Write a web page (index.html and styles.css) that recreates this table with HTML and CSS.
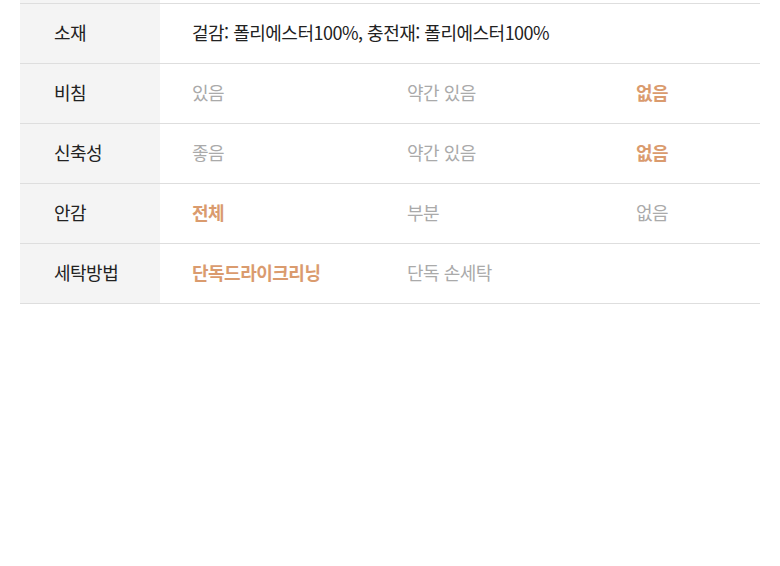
FILE: index.html
```html
<!DOCTYPE html>
<html lang="ko">
<head>
    <meta charset="UTF-8">
    <meta name="viewport" content="width=device-width, initial-scale=1.0">
    <title>상품 정보</title>
    <link rel="stylesheet" href="styles.css">
</head>
<body>
    <div class="spec-table">
        <div class="spec-row cut">
            <div class="spec-label"></div>
            <div class="spec-values"></div>
        </div>
        <div class="spec-row">
            <div class="spec-label">소재</div>
            <div class="spec-values">
                <span class="text">겉감: 폴리에스터100%, 충전재: 폴리에스터100%</span>
            </div>
        </div>
        <div class="spec-row">
            <div class="spec-label">비침</div>
            <div class="spec-values">
                <span>있음</span>
                <span>약간 있음</span>
                <span class="on">없음</span>
            </div>
        </div>
        <div class="spec-row">
            <div class="spec-label">신축성</div>
            <div class="spec-values">
                <span>좋음</span>
                <span>약간 있음</span>
                <span class="on">없음</span>
            </div>
        </div>
        <div class="spec-row">
            <div class="spec-label">안감</div>
            <div class="spec-values">
                <span class="on">전체</span>
                <span>부분</span>
                <span>없음</span>
            </div>
        </div>
        <div class="spec-row">
            <div class="spec-label">세탁방법</div>
            <div class="spec-values">
                <span class="on">단독드라이크리닝</span>
                <span>단독 손세탁</span>
            </div>
        </div>
    </div>
</body>
</html>
```

FILE: styles.css
```css
body {
    margin: 0;
    padding: 0;
    background: #fff;
    font-family: "Noto Sans CJK KR", "Noto Sans", sans-serif;
    font-size: 18px;
    letter-spacing: -0.5px;
    color: #222;
}

.spec-table {
    margin: 0 20px;
}

.spec-row {
    display: flex;
    height: 60px;
    box-sizing: border-box;
    border-bottom: 1px solid #dedede;
}

/* tail of the row above, scrolled out of view */
.spec-row.cut {
    height: 4px;
}

.spec-label {
    width: 140px;
    flex-shrink: 0;
    box-sizing: border-box;
    padding: 0 0 3px 34px;
    background: #f4f4f4;
    display: flex;
    align-items: center;
    color: #222;
}

.spec-values {
    flex: 1;
    padding: 0 0 3px 32px;
    display: grid;
    grid-template-columns: 215px 229px 1fr;
    align-items: center;
}

.spec-row.cut .spec-label,
.spec-row.cut .spec-values {
    padding-bottom: 0;
}

.spec-values span {
    color: #aaa;
}

.spec-values span.on {
    color: #da9b6e;
    font-weight: bold;
}

.spec-values span.text {
    grid-column: 1 / 4;
    color: #222;
}
```
